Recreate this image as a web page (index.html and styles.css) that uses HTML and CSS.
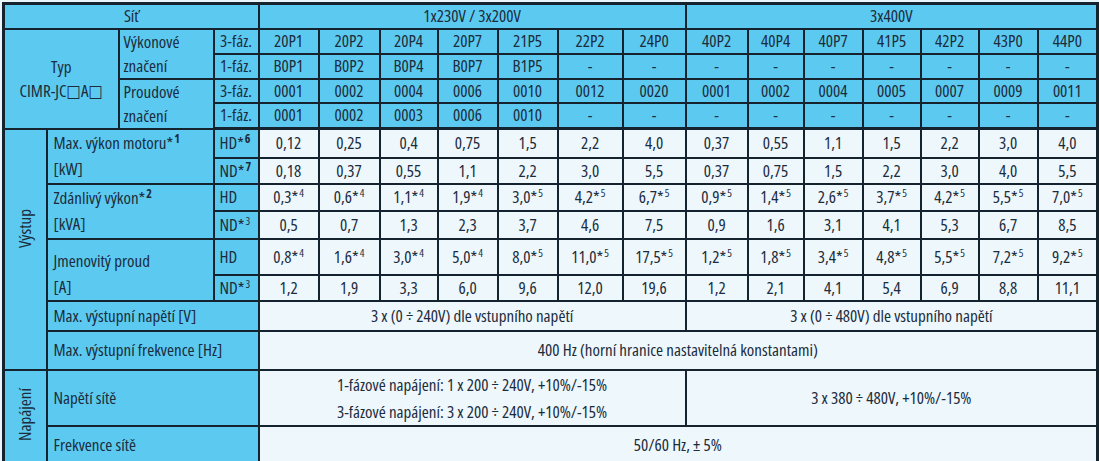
FILE: index.html
```html
<!DOCTYPE html>
<html lang="cs">
<head>
<meta charset="utf-8">
<title>Síť</title>
<link rel="stylesheet" href="styles.css">
</head>
<body>
<table class="spec">
  <colgroup>
    <col class="c-side"><col class="c-typ"><col class="c-label"><col class="c-phase">
    <col class="d60"><col class="d61"><col class="d58"><col class="d60"><col class="d60"><col class="d65"><col class="d63">
    <col class="d62"><col class="d56"><col class="d59"><col class="d58"><col class="d58"><col class="d59"><col class="d60">
  </colgroup>
  <tr class="r-sit hd">
    <td colspan="4">Síť</td>
    <td colspan="7">1x230V / 3x200V</td>
    <td colspan="7">3x400V</td>
  </tr>
  <tr class="r24 hd">
    <td colspan="2" rowspan="4" class="typ">Typ<br>CIMR-JC□A□</td>
    <td rowspan="2" class="lbl two">Výkonové<br>značení</td>
    <td>3-fáz.</td>
    <td>20P1</td><td>20P2</td><td>20P4</td><td>20P7</td><td>21P5</td><td>22P2</td><td>24P0</td>
    <td>40P2</td><td>40P4</td><td>40P7</td><td>41P5</td><td>42P2</td><td>43P0</td><td>44P0</td>
  </tr>
  <tr class="r24 hd">
    <td>1-fáz.</td>
    <td>B0P1</td><td>B0P2</td><td>B0P4</td><td>B0P7</td><td>B1P5</td><td>-</td><td>-</td>
    <td>-</td><td>-</td><td>-</td><td>-</td><td>-</td><td>-</td><td>-</td>
  </tr>
  <tr class="r24 hd">
    <td rowspan="2" class="lbl two">Proudové<br>značení</td>
    <td>3-fáz.</td>
    <td>0001</td><td>0002</td><td>0004</td><td>0006</td><td>0010</td><td>0012</td><td>0020</td>
    <td>0001</td><td>0002</td><td>0004</td><td>0005</td><td>0007</td><td>0009</td><td>0011</td>
  </tr>
  <tr class="r25 hd last-head">
    <td>1-fáz.</td>
    <td>0001</td><td>0002</td><td>0003</td><td>0006</td><td>0010</td><td>-</td><td>-</td>
    <td>-</td><td>-</td><td>-</td><td>-</td><td>-</td><td>-</td><td>-</td>
  </tr>

  <tr class="r29 body first-body">
    <td rowspan="8" class="side"><span class="vert vert-out">Výstup</span></td>
    <td colspan="2" rowspan="2" class="lbl lbl-kw">Max. výkon motoru*<span class="supb">1</span><br>[kW]</td>
    <td class="ph">HD*<span class="supb">6</span></td>
    <td>0,12</td><td>0,25</td><td>0,4</td><td>0,75</td><td>1,5</td><td>2,2</td><td>4,0</td>
    <td>0,37</td><td>0,55</td><td>1,1</td><td>1,5</td><td>2,2</td><td>3,0</td><td>4,0</td>
  </tr>
  <tr class="r26 body">
    <td class="ph">ND*<span class="supb">7</span></td>
    <td>0,18</td><td>0,37</td><td>0,55</td><td>1,1</td><td>2,2</td><td>3,0</td><td>5,5</td>
    <td>0,37</td><td>0,75</td><td>1,5</td><td>2,2</td><td>3,0</td><td>4,0</td><td>5,5</td>
  </tr>
  <tr class="r27 body">
    <td colspan="2" rowspan="2" class="lbl lbl-kva">Zdánlivý výkon*<span class="supb">2</span><br>[kVA]</td>
    <td class="ph">HD</td>
    <td>0,3*<span class="sup">4</span></td><td>0,6*<span class="sup">4</span></td><td>1,1*<span class="sup">4</span></td><td>1,9*<span class="sup">4</span></td><td>3,0*<span class="sup">5</span></td><td>4,2*<span class="sup">5</span></td><td>6,7*<span class="sup">5</span></td>
    <td>0,9*<span class="sup">5</span></td><td>1,4*<span class="sup">5</span></td><td>2,6*<span class="sup">5</span></td><td>3,7*<span class="sup">5</span></td><td>4,2*<span class="sup">5</span></td><td>5,5*<span class="sup">5</span></td><td>7,0*<span class="sup">5</span></td>
  </tr>
  <tr class="r28 body">
    <td class="ph">ND*<span class="sup">3</span></td>
    <td>0,5</td><td>0,7</td><td>1,3</td><td>2,3</td><td>3,7</td><td>4,6</td><td>7,5</td>
    <td>0,9</td><td>1,6</td><td>3,1</td><td>4,1</td><td>5,3</td><td>6,7</td><td>8,5</td>
  </tr>
  <tr class="r35 body">
    <td colspan="2" rowspan="2" class="lbl lbl-a">Jmenovitý proud<br>[A]</td>
    <td class="ph">HD</td>
    <td>0,8*<span class="sup">4</span></td><td>1,6*<span class="sup">4</span></td><td>3,0*<span class="sup">4</span></td><td>5,0*<span class="sup">4</span></td><td>8,0*<span class="sup">5</span></td><td>11,0*<span class="sup">5</span></td><td>17,5*<span class="sup">5</span></td>
    <td>1,2*<span class="sup">5</span></td><td>1,8*<span class="sup">5</span></td><td>3,4*<span class="sup">5</span></td><td>4,8*<span class="sup">5</span></td><td>5,5*<span class="sup">5</span></td><td>7,2*<span class="sup">5</span></td><td>9,2*<span class="sup">5</span></td>
  </tr>
  <tr class="r25 body">
    <td class="ph">ND*<span class="sup">3</span></td>
    <td>1,2</td><td>1,9</td><td>3,3</td><td>6,0</td><td>9,6</td><td>12,0</td><td>19,6</td>
    <td>1,2</td><td>2,1</td><td>4,1</td><td>5,4</td><td>6,9</td><td>8,8</td><td>11,1</td>
  </tr>
  <tr class="r30 body">
    <td colspan="3" class="lbl">Max. výstupní napětí [V]</td>
    <td colspan="7">3 x (0 ÷ 240V) dle vstupního napětí</td>
    <td colspan="7">3 x (0 ÷ 480V) dle vstupního napětí</td>
  </tr>
  <tr class="r39 body">
    <td colspan="3" class="lbl">Max. výstupní frekvence [Hz]</td>
    <td colspan="14">400 Hz (horní hranice nastavitelná konstantami)</td>
  </tr>
  <tr class="r52 body group">
    <td rowspan="3" class="side"><span class="vert vert-in">Napájení</span></td>
    <td colspan="3" class="lbl">Napětí sítě</td>
    <td colspan="7" class="multi">1-fázové napájení: 1 x 200 ÷ 240V, +10%/-15%<br>3-fázové napájení: 3 x 200 ÷ 240V, +10%/-15%</td>
    <td colspan="7">3 x 380 ÷ 480V, +10%/-15%</td>
  </tr>
  <tr class="r39 body">
    <td colspan="3" class="lbl">Frekvence sítě</td>
    <td colspan="14">50/60 Hz, ± 5%</td>
  </tr>
  <tr class="r20 body">
    <td colspan="3" class="lbl"></td>
    <td colspan="14"></td>
  </tr>
</table>
</body>
</html>
```

FILE: styles.css
```css
html, body {
  margin: 0;
  padding: 0;
  background: #eaf5fb;
  overflow: hidden;
}

body {
  width: 1099px;
  height: 461px;
}

.spec {
  margin: 2px 0 0 2px;
  border-collapse: collapse;
  table-layout: fixed;
  width: 1095px;
  font-family: "Open Sans", "DejaVu Sans Condensed", "Liberation Sans", sans-serif;
  font-stretch: 75%;
  font-size: 17px;
  font-weight: 400;
  color: #1b2c3c;
  border: 3px solid #15232f;
}

.spec td {
  border: 2px solid #15232f;
  padding: 0;
  text-align: center;
  vertical-align: middle;
  line-height: 20px;
  white-space: nowrap;
  overflow: hidden;
}

.c-side { width: 43px; }
.c-typ { width: 72px; }
.c-label { width: 95px; }
.c-phase { width: 45px; }
.d56 { width: 56px; }
.d58 { width: 58px; }
.d59 { width: 59px; }
.d60 { width: 60px; }
.d61 { width: 61px; }
.d62 { width: 62px; }
.d63 { width: 63px; }
.d65 { width: 65px; }

.r-sit { height: 25px; }
.r20 { height: 20px; }
.r24 { height: 24px; }
.r25 { height: 25px; }
.r26 { height: 26px; }
.r27 { height: 27px; }
.r28 { height: 28px; }
.r29 { height: 29px; }
.r30 { height: 30px; }
.r35 { height: 35px; }
.r39 { height: 39px; }
.r52 { height: 52px; }

.hd td {
  background: #5ccaf0;
}

.body td {
  background: #eef7fc;
}

.body td.lbl,
.body td.ph,
.body td.side {
  background: #5ccaf0;
}

.last-head td {
  border-bottom-width: 3px;
}

.typ {
  line-height: 24px !important;
}

.lbl {
  text-align: left !important;
  padding-left: 6px !important;
}

.hd .lbl {
  padding-left: 4px !important;
}

.two {
  line-height: 24px !important;
}

.lbl-kw,
.lbl-kva,
.lbl-a {
  line-height: 26px !important;
}

.lbl-a {
  padding-top: 8px !important;
}

.ph {
  text-align: left !important;
  padding-left: 5px !important;
}

.sup,
.supb {
  font-size: 11px;
  position: relative;
  top: -6px;
  line-height: 0;
  margin-left: 1px;
}

.supb {
  font-weight: 700;
  font-size: 12px;
}

.multi {
  line-height: 27px !important;
}

.side {
  padding: 0;
}

.vert {
  display: inline-block;
  writing-mode: vertical-rl;
  transform: rotate(180deg);
  line-height: 20px;
}

.vert-out {
  margin-bottom: 36px;
}

.vert-in {
  margin-bottom: 20px;
}
```
